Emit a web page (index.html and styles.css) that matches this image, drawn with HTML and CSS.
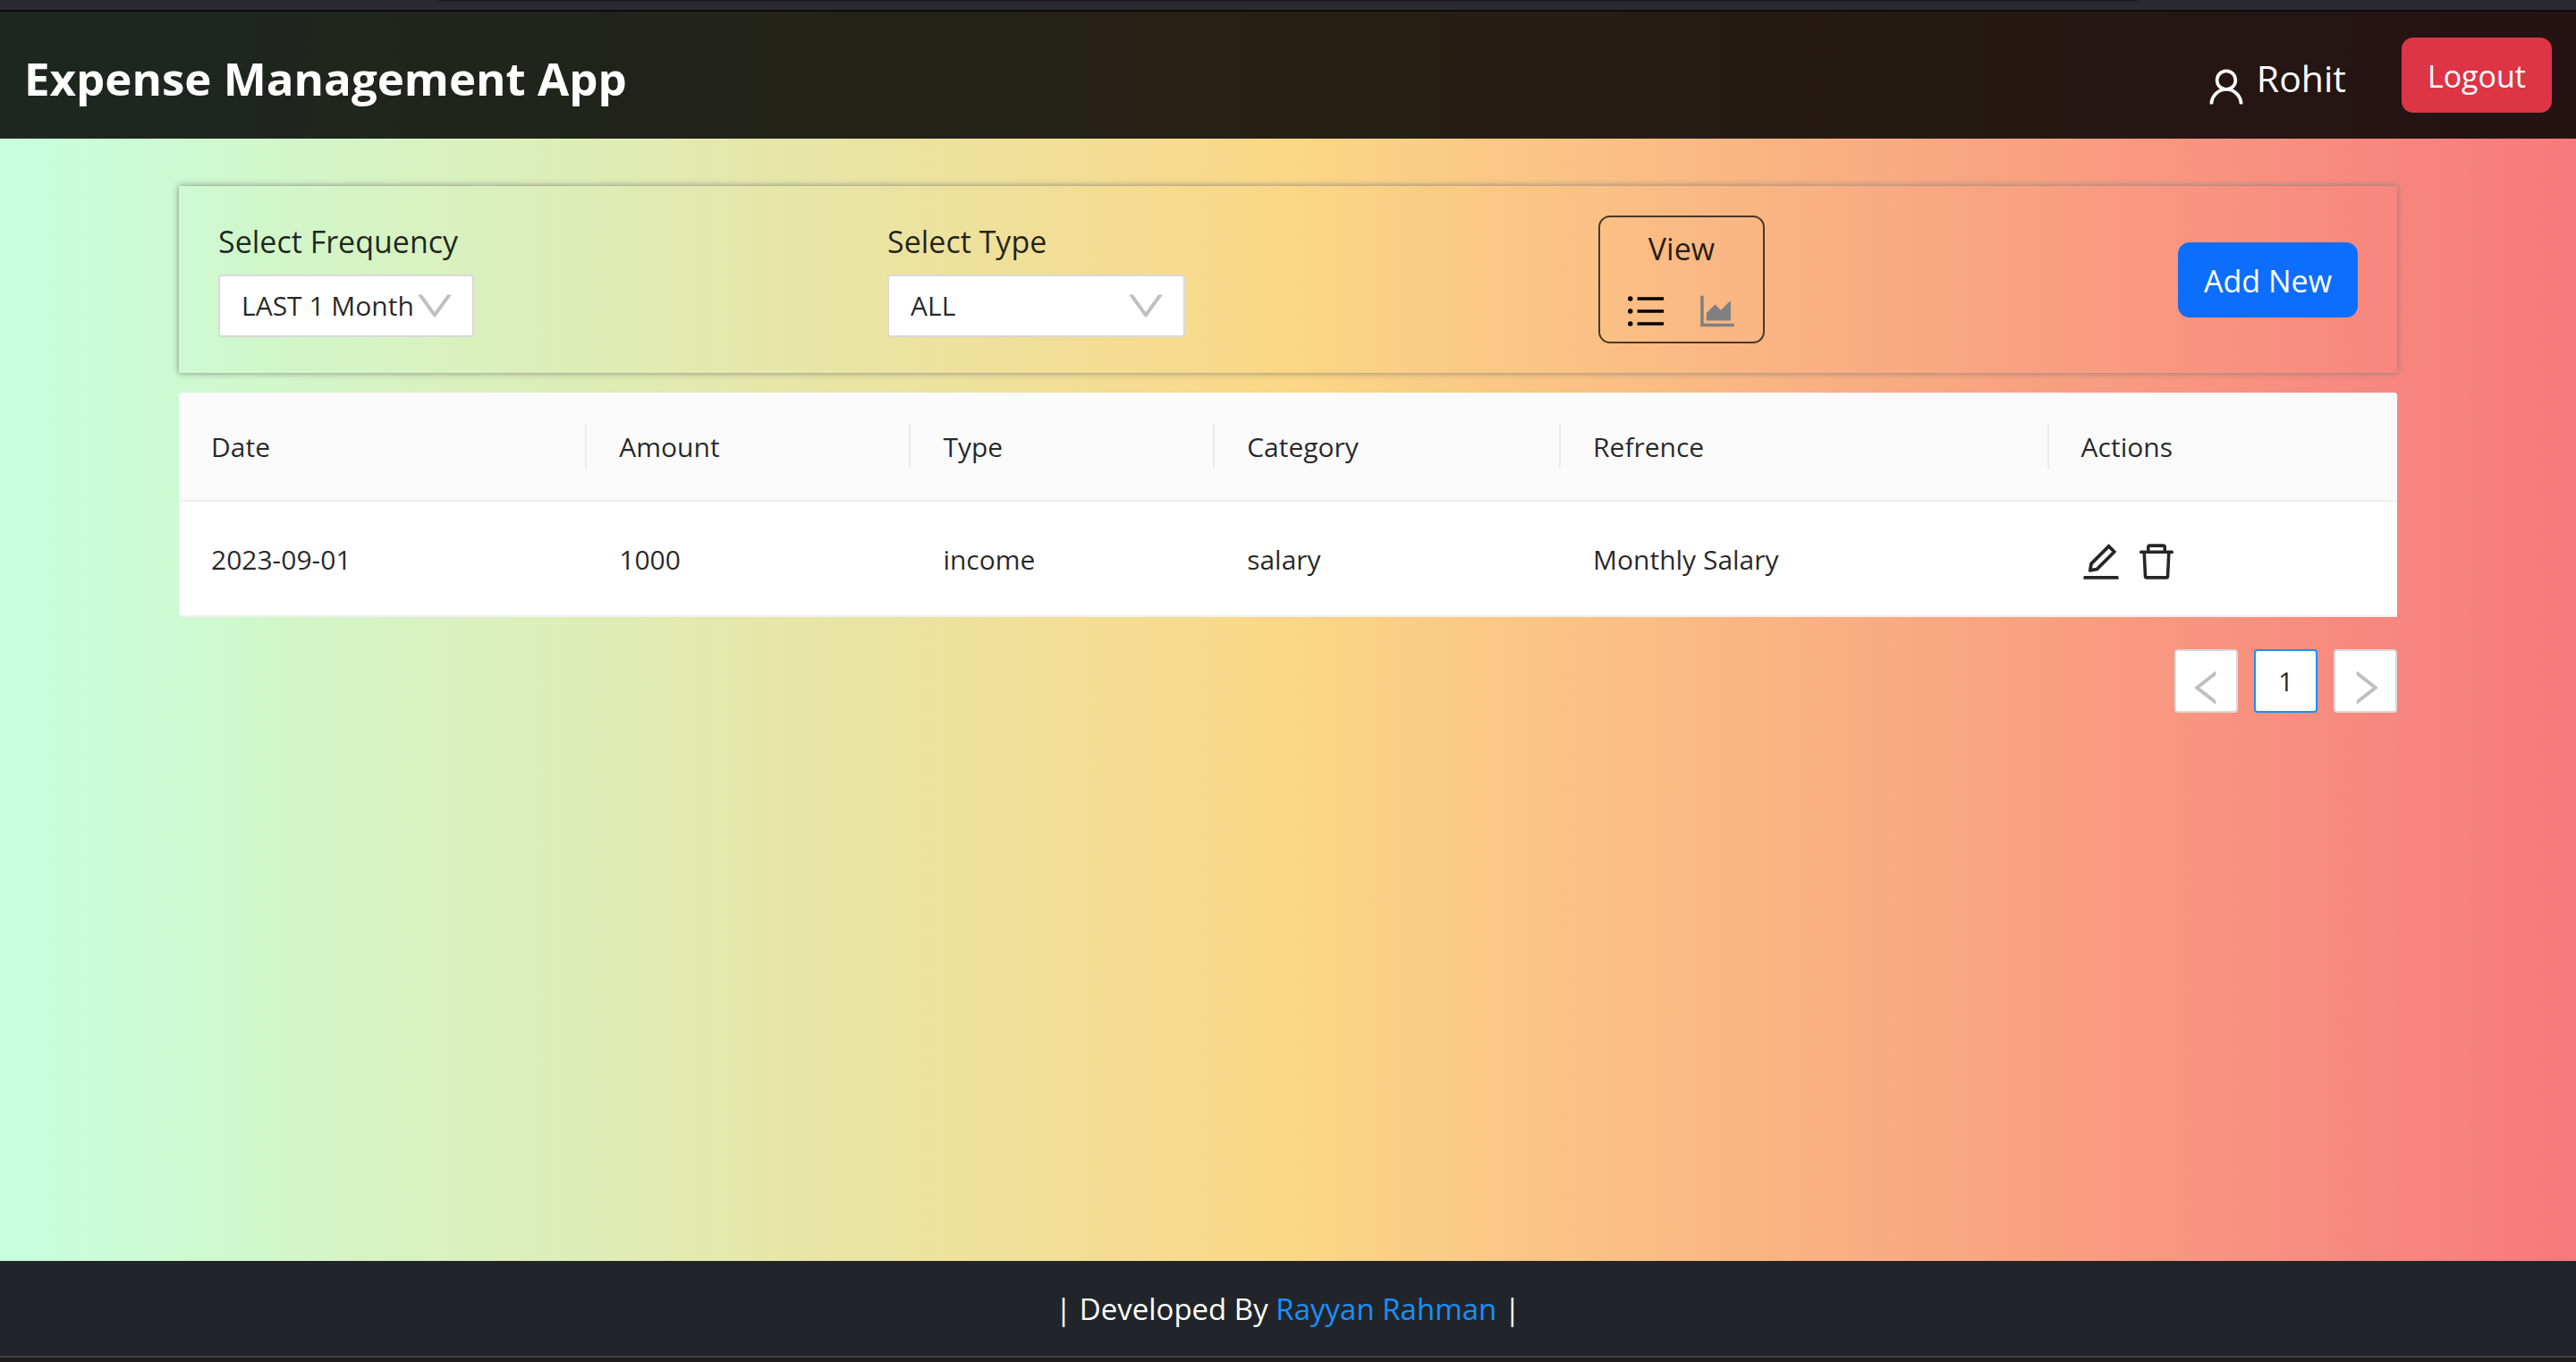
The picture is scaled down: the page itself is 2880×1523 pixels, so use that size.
FILE: index.html
```html
<!DOCTYPE html>
<html lang="en">
<head>
<meta charset="utf-8">
<meta name="viewport" content="width=device-width, initial-scale=1">
<title>Expense Management App</title>
<link rel="stylesheet" href="styles.css">
</head>
<body>
<div class="window-top"><div class="window-tab"></div></div>

<header class="navbar">
  <h1 class="brand">Expense Management App</h1>
  <div class="account">
    <p class="user">
      <svg class="icon user-icon" viewBox="64 64 896 896" aria-hidden="true"><path d="M858.5 763.6a374 374 0 00-80.6-119.5 375.63 375.63 0 00-119.5-80.6c-.4-.2-.8-.3-1.2-.5C719.5 518 760 444.7 760 362c0-137-111-248-248-248S264 225 264 362c0 82.7 40.5 156 102.8 201.1-.4.2-.8.3-1.2.5-44.8 18.9-85 46-119.5 80.6a375.63 375.63 0 00-80.6 119.5A371.7 371.7 0 00136 901.8a8 8 0 008 8.2h60c4.4 0 7.9-3.5 8-7.8 2-77.2 33-149.5 87.8-204.3 56.7-56.7 132-87.9 212.2-87.9s155.5 31.2 212.2 87.9C779 752.7 810 825 812 902.2c.1 4.4 3.6 7.8 8 7.8h60a8 8 0 008-8.2c-1-47.8-10.9-94.3-29.5-138.2zM512 534c-45.9 0-89.1-17.9-121.6-50.4S340 407.9 340 362c0-45.9 17.9-89.1 50.4-121.6S466.1 190 512 190s89.1 17.9 121.6 50.4S684 316.1 684 362c0 45.9-17.9 89.1-50.4 121.6S557.9 534 512 534z"/></svg>
      <span>Rohit</span>
    </p>
    <button class="btn btn-danger" type="button">Logout</button>
  </div>
</header>

<main class="content">
  <section class="filters">
    <div class="field">
      <label for="frequency">Select Frequency</label>
      <div class="select select-frequency">
        <select id="frequency"><option>LAST 1 Month</option></select>
        <svg class="icon arrow" viewBox="64 64 896 896" aria-hidden="true"><path d="M884 256h-75c-5.1 0-9.9 2.5-12.9 6.6L512 654.2 227.9 262.6c-3-4.1-7.8-6.6-12.9-6.6h-75c-6.5 0-10.3 7.4-6.5 12.7l352.6 486.1c12.8 17.6 39 17.6 51.7 0l352.6-486.1c3.9-5.3.1-12.7-6.4-12.7z"/></svg>
      </div>
    </div>
    <div class="field">
      <label for="type">Select Type</label>
      <div class="select select-type">
        <select id="type"><option>ALL</option></select>
        <svg class="icon arrow" viewBox="64 64 896 896" aria-hidden="true"><path d="M884 256h-75c-5.1 0-9.9 2.5-12.9 6.6L512 654.2 227.9 262.6c-3-4.1-7.8-6.6-12.9-6.6h-75c-6.5 0-10.3 7.4-6.5 12.7l352.6 486.1c12.8 17.6 39 17.6 51.7 0l352.6-486.1c3.9-5.3.1-12.7-6.4-12.7z"/></svg>
      </div>
    </div>
    <div class="view">
      <span>View</span>
      <div class="view-icons">
        <button class="icon-btn active" type="button" aria-label="Table view"><svg class="icon" viewBox="64 64 896 896" aria-hidden="true"><path d="M912 192H328c-4.400 0-8 3.600-8 8v56c0 4.400 3.600 8 8 8h584c4.400 0 8-3.600 8-8v-56c0-4.400-3.600-8-8-8zm0 284H328c-4.400 0-8 3.600-8 8v56c0 4.400 3.600 8 8 8h584c4.400 0 8-3.600 8-8v-56c0-4.400-3.600-8-8-8zm0 284H328c-4.400 0-8 3.600-8 8v56c0 4.400 3.600 8 8 8h584c4.400 0 8-3.600 8-8v-56c0-4.400-3.600-8-8-8zM104 228a56 56 0 10112 0 56 56 0 10-112 0zm0 284a56 56 0 10112 0 56 56 0 10-112 0zm0 284a56 56 0 10112 0 56 56 0 10-112 0z"/></svg></button>
        <button class="icon-btn inactive" type="button" aria-label="Chart view"><svg class="icon" viewBox="64 64 896 896" aria-hidden="true"><path d="M888 792H200V168c0-4.400-3.600-8-8-8h-56c-4.400 0-8 3.600-8 8v688c0 4.400 3.600 8 8 8h752c4.400 0 8-3.600 8-8v-56c0-4.400-3.600-8-8-8zm-616-64h536c4.400 0 8-3.600 8-8V284c0-7.200-8.700-10.700-13.700-5.700L592 488.600l-125.400-124a8.030 8.030 0 00-11.300 0l-189 189.600a7.870 7.870 0 00-2.300 5.600V720c0 4.400 3.600 8 8 8z"/></svg></button>
      </div>
    </div>
    <button class="btn btn-primary" type="button">Add New</button>
  </section>

  <table class="records">
    <colgroup>
      <col class="col-date"><col class="col-amount"><col class="col-type"><col class="col-category"><col class="col-reference"><col class="col-actions">
    </colgroup>
    <thead>
      <tr><th scope="col">Date</th><th scope="col">Amount</th><th scope="col">Type</th><th scope="col">Category</th><th scope="col">Refrence</th><th scope="col">Actions</th></tr>
    </thead>
    <tbody>
      <tr>
        <td>2023-09-01</td><td>1000</td><td>income</td><td>salary</td><td>Monthly Salary</td>
        <td>
          <div class="actions">
            <button class="icon-btn" type="button" aria-label="Edit"><svg class="icon" viewBox="64 64 896 896" aria-hidden="true"><path d="M257.7 752c2 0 4-.2 6-.5L431.9 722c2-.4 3.900-1.300 5.300-2.800l423.900-423.900a9.960 9.960 0 000-14.100L694.900 114.900c-1.900-1.900-4.400-2.900-7.100-2.900s-5.200 1-7.100 2.900L256.800 538.800c-1.500 1.500-2.400 3.300-2.800 5.300l-29.500 168.200a33.500 33.500 0 009.400 29.800c6.600 6.400 14.900 9.900 23.800 9.900zm67.400-174.400L687.800 215l73.300 73.300-362.700 362.600-88.900 15.700 15.600-89zM880 836H144c-17.700 0-32 14.300-32 32v36c0 4.400 3.600 8 8 8h784c4.400 0 8-3.600 8-8v-36c0-17.700-14.300-32-32-32z"/></svg></button>
            <button class="icon-btn" type="button" aria-label="Delete"><svg class="icon" viewBox="64 64 896 896" aria-hidden="true"><path d="M360 184h-8c4.400 0 8-3.600 8-8v8h304v-8c0 4.400 3.600 8 8 8h-8v72h72v-80c0-35.300-28.700-64-64-64H352c-35.300 0-64 28.700-64 64v80h72v-72zm504 72H160c-17.700 0-32 14.300-32 32v32c0 4.400 3.600 8 8 8h60.400l24.700 523c1.600 34.100 29.800 61 63.900 61h454c34.200 0 62.300-26.800 63.900-61l24.700-523H888c4.400 0 8-3.600 8-8v-32c0-17.700-14.300-32-32-32zM731.300 840H292.700l-24.200-512h487l-24.200 512z"/></svg></button>
          </div>
        </td>
      </tr>
    </tbody>
  </table>

  <nav class="pagination" aria-label="Pages">
    <button class="page page-step" type="button" disabled aria-label="Previous page"><svg class="icon" viewBox="64 64 896 896" aria-hidden="true"><path d="M724 218.300V141c0-6.700-7.700-10.400-12.900-6.300L260.300 486.800a31.860 31.860 0 000 50.300l450.800 352.100c5.300 4.100 12.900.4 12.900-6.300v-77.300c0-4.900-2.300-9.600-6.100-12.600l-360-281 360-281.100c3.800-3 6.100-7.700 6.100-12.600z"/></svg></button>
    <button class="page page-current" type="button" aria-current="page">1</button>
    <button class="page page-step" type="button" disabled aria-label="Next page"><svg class="icon" viewBox="64 64 896 896" aria-hidden="true"><path d="M765.700 486.800L314.900 134.700A7.970 7.970 0 00302 141v77.300c0 4.900 2.300 9.600 6.100 12.600l360 281.100-360 281.100c-3.900 3-6.100 7.700-6.100 12.600V883c0 6.700 7.700 10.400 12.900 6.300l450.800-352.100a31.960 31.960 0 000-50.400z"/></svg></button>
  </nav>
</main>

<footer class="footer">
  <p>| Developed By <a href="#">Rayyan Rahman</a> |</p>
</footer>
<div class="window-bottom"></div>
</body>
</html>
```

FILE: styles.css
```css
*, *::before, *::after { box-sizing: border-box; }

body {
  margin: 0;
  min-height: 100vh;
  display: flex;
  flex-direction: column;
  font-family: "Segoe UI", "Open Sans", "Noto Sans", sans-serif;
  font-size: 34px;
  line-height: 46px;
  color: rgba(0, 0, 0, 0.85);
  background: linear-gradient(to right, #c6ffdd, #fbd786, #f7797d);
}

h1, p { margin: 0; }

button, select {
  font: inherit;
  color: inherit;
  margin: 0;
}

.icon {
  display: block;
  width: 44px;
  height: 44px;
  fill: currentColor;
}

/* Window frame */
.window-top {
  height: 13px;
  background: #2b2a33;
  border-bottom: 2px solid #0c0c0d;
}

.window-tab {
  height: 2px;
  margin: 0 17%;
  background: #1c1b22;
}

.window-bottom {
  height: 7px;
  background: #1f1c1d;
  border-top: 2px solid #414141;
}

/* Header */
.navbar {
  display: flex;
  justify-content: space-between;
  align-items: center;
  padding: 29px 27px;
  background: rgba(0, 0, 0, 0.85);
  color: #fff;
}

.brand {
  padding-top: 6px;
  font-size: 51px;
  line-height: 60px;
  font-weight: 700;
}

.account {
  display: flex;
  align-items: center;
  gap: 62px;
}

.user {
  display: flex;
  align-items: center;
  gap: 12px;
  padding-top: 6px;
  font-size: 41px;
  line-height: 60px;
}

.user-icon { margin-top: 20px; }

.btn {
  height: 84px;
  padding: 2px 29px 0;
  border: 0;
  border-radius: 13px;
  color: #fff;
}

.btn-danger { background: #dc3545; }
.btn-primary { background: #0d6efd; }

/* Main column */
.content {
  flex: 1;
  width: 100%;
  max-width: 2480px;
  margin: 0 auto;
  padding: 53px 0;
}

.filters {
  display: flex;
  flex-wrap: wrap;
  justify-content: space-between;
  align-items: center;
  padding: 33px 44px;
  margin-bottom: 22px;
  box-shadow: 0 0 7px #808080;
}

.field {
  display: flex;
  flex-direction: column;
  gap: 15px;
  line-height: 44px;
}

.select { position: relative; }
.select-frequency { width: 286px; }
.select-type { width: 333px; }

.select select {
  display: block;
  width: 100%;
  height: 70px;
  padding: 0 24px;
  border: 2px solid #d9d9d9;
  border-radius: 4px;
  background: #fff;
  appearance: none;
  font-size: 30px;
}

.arrow {
  position: absolute;
  top: 13px;
  right: 22px;
  color: #bfbfbf;
  pointer-events: none;
}

.view {
  display: flex;
  flex-direction: column;
  align-items: center;
  gap: 25px;
  padding: 12px 29px;
  border: 2px solid rgba(0, 0, 0, 0.7);
  border-radius: 13px;
}

.view-icons {
  display: flex;
  gap: 36px;
}

.icon-btn {
  padding: 0;
  border: 0;
  background: none;
}

.active { color: #000; }
.inactive { color: #808080; }

/* Records */
.records {
  width: 100%;
  table-layout: fixed;
  border-collapse: separate;
  border-spacing: 0;
  border-radius: 4px 4px 0 0;
  overflow: hidden;
  background: #fff;
  font-size: 30px;
  line-height: 48px;
}

.col-date { width: 18.4%; }
.col-amount { width: 14.6%; }
.col-type { width: 13.7%; }
.col-category { width: 15.6%; }
.col-reference { width: 22%; }
.col-actions { width: 15.7%; }

.records th,
.records td {
  text-align: left;
  font-weight: 400;
  border-bottom: 2px solid #f0f0f0;
}

.records th {
  position: relative;
  padding: 37px 36px 35px;
  background: #fafafa;
}

.records th:not(:last-child)::after {
  content: "";
  position: absolute;
  top: 35px;
  right: 0;
  width: 2px;
  height: 50px;
  background: #ebebeb;
}

.records td { padding: 41px 36px 38px; }

.actions {
  display: flex;
  gap: 18px;
  padding-top: 4px;
}

/* Pagination */
.pagination {
  display: flex;
  justify-content: flex-end;
  gap: 18px;
  margin-top: 36px;
}

.page {
  display: flex;
  justify-content: center;
  align-items: center;
  width: 71px;
  height: 71px;
  padding: 0;
  border: 2px solid #d9d9d9;
  border-radius: 4px;
  background: #fff;
  font-size: 30px;
}

.page-step {
  padding-top: 14px;
  color: #bfbfbf;
}

.page-current { border-color: #1890ff; }

/* Footer */
.footer {
  padding: 31px 30px 29px;
  background: #212529;
  color: #fff;
  font-size: 33px;
  text-align: center;
}

.footer a {
  color: #1890ff;
  text-decoration: none;
}
```
